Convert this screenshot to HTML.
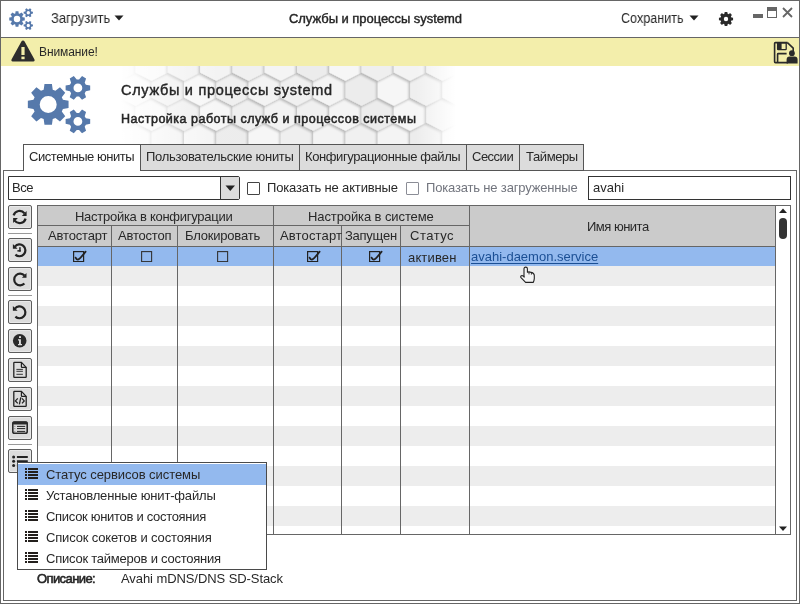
<!DOCTYPE html>
<html><head><meta charset="utf-8">
<style>
html,body{margin:0;padding:0;}
body{width:800px;height:604px;position:relative;overflow:hidden;background:#fff;font-family:"Liberation Sans",sans-serif;color:#282828;-webkit-font-smoothing:antialiased;}
.t{will-change:transform;}
.t{position:absolute;white-space:nowrap;font-size:13px;line-height:13px;}
.tb{position:absolute;left:8px;width:24px;height:24px;box-sizing:border-box;border:1px solid #5e5e5e;border-radius:2px;background:#dcdcdc;box-shadow:inset 0 0 0 1px #e9e9e9;}
.tb svg{position:absolute;left:-1px;top:-1px;}
.sep{position:absolute;left:8px;width:24px;height:1px;background:#9a9a9a;}
.hl{position:absolute;height:1px;background:#666666;}
.vl{position:absolute;width:1px;background:#666666;}
.tab{position:absolute;top:144px;height:27px;box-sizing:border-box;border:1px solid #555;background:#dcdcdc;}
</style></head><body>
<!-- window border -->
<div style="position:absolute;left:0;top:0;width:800px;height:604px;box-sizing:border-box;border:1px solid #666666;"></div>

<!-- title bar -->
<svg style="position:absolute;left:0;top:0" width="40" height="37"><path fill="#5679ab" fill-rule="evenodd" d="M15.28,13.41 L15.59,11.26 L18.41,11.26 L18.72,13.41 L19.74,13.83 L21.47,12.53 L23.47,14.53 L22.17,16.26 L22.59,17.28 L24.74,17.59 L24.74,20.41 L22.59,20.72 L22.17,21.74 L23.47,23.47 L21.47,25.47 L19.74,24.17 L18.72,24.59 L18.41,26.74 L15.59,26.74 L15.28,24.59 L14.26,24.17 L12.53,25.47 L10.53,23.47 L11.83,21.74 L11.41,20.72 L9.26,20.41 L9.26,17.59 L11.41,17.28 L11.83,16.26 L10.53,14.53 L12.53,12.53 L14.26,13.83ZM20.23,19.00 A3.23,3.23 0 1,0 13.77,19.00 A3.23,3.23 0 1,0 20.23,19.00ZM31.31,11.50 L32.95,11.84 L32.95,13.62 L31.31,13.96 L30.87,14.73 L31.39,16.33 L29.85,17.22 L28.73,15.97 L27.84,15.97 L26.72,17.22 L25.18,16.33 L25.70,14.73 L25.26,13.96 L23.62,13.62 L23.62,11.84 L25.26,11.50 L25.70,10.73 L25.18,9.13 L26.72,8.24 L27.84,9.49 L28.73,9.49 L29.85,8.24 L31.39,9.13 L30.87,10.73ZM29.96,12.73 A1.67,1.67 0 1,0 26.61,12.73 A1.67,1.67 0 1,0 29.96,12.73ZM31.31,24.23 L32.95,24.57 L32.95,26.35 L31.31,26.69 L30.87,27.46 L31.39,29.06 L29.85,29.95 L28.73,28.70 L27.84,28.70 L26.72,29.95 L25.18,29.06 L25.70,27.46 L25.26,26.69 L23.62,26.35 L23.62,24.57 L25.26,24.23 L25.70,23.46 L25.18,21.86 L26.72,20.97 L27.84,22.22 L28.73,22.22 L29.85,20.97 L31.39,21.86 L30.87,23.46ZM29.96,25.46 A1.67,1.67 0 1,0 26.61,25.46 A1.67,1.67 0 1,0 29.96,25.46Z"/></svg>
<div class="t " style="left:51px;top:11px;font-size:14px;line-height:14px;transform:scaleX(0.925);transform-origin:0 0">Загрузить</div>
<svg style="position:absolute;left:114px;top:15px" width="10" height="6"><path d="M0.5,0.5 H9.5 L5,5.5Z" fill="#222"/></svg>
<div class="t " style="left:289px;top:12px;letter-spacing:-0.05px;-webkit-text-stroke:0.4px #222;">Службы и процессы systemd</div>
<div class="t " style="left:621px;top:11px;font-size:14px;line-height:14px;transform:scaleX(0.9);transform-origin:0 0">Сохранить</div>
<svg style="position:absolute;left:689px;top:15px" width="10" height="6"><path d="M0.5,0.5 H9.5 L5,5.5Z" fill="#222"/></svg>
<svg style="position:absolute;left:718px;top:11px" width="16" height="16" viewBox="0 0 16 16"><path fill="#2a2a2a" fill-rule="evenodd" d="M6.52,2.60 L6.65,0.93 L9.35,0.93 L9.48,2.60 L10.77,3.14 L12.05,2.05 L13.95,3.95 L12.86,5.23 L13.40,6.52 L15.07,6.65 L15.07,9.35 L13.40,9.48 L12.86,10.77 L13.95,12.05 L12.05,13.95 L10.77,12.86 L9.48,13.40 L9.35,15.07 L6.65,15.07 L6.52,13.40 L5.23,12.86 L3.95,13.95 L2.05,12.05 L3.14,10.77 L2.60,9.48 L0.93,9.35 L0.93,6.65 L2.60,6.52 L3.14,5.23 L2.05,3.95 L3.95,2.05 L5.23,3.14ZM10.20,8.00 A2.20,2.20 0 1,0 5.80,8.00 A2.20,2.20 0 1,0 10.20,8.00Z"/></svg>
<div style="position:absolute;left:753px;top:14px;width:10px;height:4px;background:#666666"></div>
<div style="position:absolute;left:767px;top:7px;width:10px;height:11px;box-sizing:border-box;border:1px solid #666666;border-top:4px solid #666666"></div>
<svg style="position:absolute;left:782px;top:7px" width="11" height="11"><path d="M1,1 L10,10 M10,1 L1,10" stroke="#666666" stroke-width="1.8"/></svg>
<div class="hl" style="left:0;top:37px;width:800px"></div>

<!-- warning bar -->
<div style="position:absolute;left:1px;top:38px;width:798px;height:28px;background:#f3eeab"></div>
<svg style="position:absolute;left:10px;top:39px" width="26" height="24" viewBox="0 0 26 24"><path d="M13,1.5 Q14,1.5 14.6,2.6 L24.5,20.4 Q25.2,22.3 23.4,22.6 L2.6,22.6 Q0.8,22.3 1.5,20.4 L11.4,2.6 Q12,1.5 13,1.5Z" fill="#2d2d2d"/><rect x="11.4" y="8" width="3.2" height="8" fill="#f3eeab"/><rect x="11.4" y="17.6" width="3.2" height="2.6" fill="#f3eeab"/></svg>
<div class="t " style="left:39px;top:46px;font-size:12px;line-height:12px;letter-spacing:-0.1px">Внимание!</div>
<svg style="position:absolute;left:773px;top:41px" width="26" height="24" viewBox="0 0 26 24"><path d="M14.4,1.6 L20.2,7.2 L20.2,11" fill="none" stroke="#2a2a2a" stroke-width="1.6"/><path d="M15,21.6 L2.4,21.6 Q1.6,21.6 1.6,20.8 L1.6,2.4 Q1.6,1.6 2.4,1.6 L14.6,1.6" fill="none" stroke="#2a2a2a" stroke-width="1.6"/><rect x="4.6" y="1.8" width="8.6" height="6.8" rx="0.6" fill="none" stroke="#2a2a2a" stroke-width="1.3"/><rect x="4.4" y="1.8" width="4.2" height="6.8" fill="#2a2a2a"/><path d="M4.6,21 L4.6,13.2 Q4.6,12.6 5.2,12.6 L13.6,12.6" fill="none" stroke="#2a2a2a" stroke-width="1.6"/><circle cx="18.9" cy="12.2" r="2.9" fill="#2a2a2a"/><path d="M13.6,22.6 L13.6,18.8 Q13.6,15.6 16.6,15.6 L21.4,15.6 Q24.6,15.6 24.6,18.8 L24.6,22.6 Z" fill="#2a2a2a"/></svg>

<!-- banner -->
<div style="position:absolute;left:1px;top:66px;width:798px;height:104px;overflow:hidden">
<svg width="798" height="104" viewBox="1 66 798 104" style="position:absolute;left:0;top:0"><rect x="1" y="66" width="798" height="104" fill="#e6e6e6"/>
<defs><linearGradient id="hg1" x1="0" x2="1" y1="0" y2="1"><stop offset="0" stop-color="#f8f8f8"/><stop offset="1" stop-color="#e2e2e2"/></linearGradient>
<linearGradient id="hg2" x1="0" x2="1" y1="0" y2="1"><stop offset="0" stop-color="#f2f2f2"/><stop offset="1" stop-color="#dedede"/></linearGradient>
<linearGradient id="hg3" x1="0" x2="1" y1="0" y2="1"><stop offset="0" stop-color="#fafafa"/><stop offset="1" stop-color="#e8e8e8"/></linearGradient>
<linearGradient id="hg4" x1="1" x2="0" y1="0" y2="1"><stop offset="0" stop-color="#f4f4f4"/><stop offset="1" stop-color="#e0e0e0"/></linearGradient>
<filter id="hsh" x="-10%" y="-10%" width="120%" height="120%"><feDropShadow dx="-1.4" dy="1.8" stdDeviation="1.3" flood-color="#000" flood-opacity="0.24"/></filter>
<linearGradient id="fade" x1="0" x2="1" y1="0" y2="0">
<stop offset="0" stop-color="#fff" stop-opacity="1"/>
<stop offset="0.15" stop-color="#fff" stop-opacity="1"/>
<stop offset="0.2" stop-color="#fff" stop-opacity="0.6"/>
<stop offset="0.27" stop-color="#fff" stop-opacity="0.03"/>
<stop offset="0.52" stop-color="#fff" stop-opacity="0"/>
<stop offset="0.57" stop-color="#fff" stop-opacity="1"/>
<stop offset="1" stop-color="#fff" stop-opacity="1"/>
</linearGradient></defs>
<polygon points="103.2,172.3 119.4,180.5 119.4,197.5 103.2,205.7 87.1,197.5 87.1,180.5" fill="#ececec" filter="url(#hsh)"/>
<polygon points="135.5,172.3 151.7,180.5 151.7,197.5 135.5,205.7 119.4,197.5 119.4,180.5" fill="#f6f6f6" filter="url(#hsh)"/>
<polygon points="167.8,172.3 184.0,180.5 184.0,197.5 167.8,205.7 151.7,197.5 151.7,180.5" fill="#efefef" filter="url(#hsh)"/>
<polygon points="200.1,172.3 216.3,180.5 216.3,197.5 200.1,205.7 184.0,197.5 184.0,180.5" fill="#f3f3f3" filter="url(#hsh)"/>
<polygon points="232.4,172.3 248.6,180.5 248.6,197.5 232.4,205.7 216.3,197.5 216.3,180.5" fill="#f0f0f0" filter="url(#hsh)"/>
<polygon points="264.7,172.3 280.9,180.5 280.9,197.5 264.7,205.7 248.6,197.5 248.6,180.5" fill="#f4f4f4" filter="url(#hsh)"/>
<polygon points="297.0,172.3 313.1,180.5 313.1,197.5 297.0,205.7 280.9,197.5 280.9,180.5" fill="#ececec" filter="url(#hsh)"/>
<polygon points="329.3,172.3 345.4,180.5 345.4,197.5 329.3,205.7 313.2,197.5 313.2,180.5" fill="#f6f6f6" filter="url(#hsh)"/>
<polygon points="361.6,172.3 377.8,180.5 377.8,197.5 361.6,205.7 345.5,197.5 345.5,180.5" fill="#efefef" filter="url(#hsh)"/>
<polygon points="393.9,172.3 410.1,180.5 410.1,197.5 393.9,205.7 377.8,197.5 377.8,180.5" fill="#f3f3f3" filter="url(#hsh)"/>
<polygon points="426.2,172.3 442.4,180.5 442.4,197.5 426.2,205.7 410.1,197.5 410.1,180.5" fill="#f0f0f0" filter="url(#hsh)"/>
<polygon points="458.5,172.3 474.6,180.5 474.6,197.5 458.5,205.7 442.4,197.5 442.4,180.5" fill="#f4f4f4" filter="url(#hsh)"/>
<polygon points="490.8,172.3 506.9,180.5 506.9,197.5 490.8,205.7 474.7,197.5 474.7,180.5" fill="#ececec" filter="url(#hsh)"/>
<polygon points="119.4,147.3 135.5,155.5 135.5,172.5 119.4,180.7 103.2,172.5 103.2,155.5" fill="#efefef" filter="url(#hsh)"/>
<polygon points="151.7,147.3 167.8,155.5 167.8,172.5 151.7,180.7 135.5,172.5 135.5,155.5" fill="#f3f3f3" filter="url(#hsh)"/>
<polygon points="184.0,147.3 200.1,155.5 200.1,172.5 184.0,180.7 167.8,172.5 167.8,155.5" fill="#f0f0f0" filter="url(#hsh)"/>
<polygon points="216.3,147.3 232.4,155.5 232.4,172.5 216.3,180.7 200.1,172.5 200.1,155.5" fill="#f4f4f4" filter="url(#hsh)"/>
<polygon points="248.6,147.3 264.7,155.5 264.7,172.5 248.6,180.7 232.4,172.5 232.4,155.5" fill="#ececec" filter="url(#hsh)"/>
<polygon points="280.9,147.3 297.0,155.5 297.0,172.5 280.9,180.7 264.7,172.5 264.7,155.5" fill="#f6f6f6" filter="url(#hsh)"/>
<polygon points="313.2,147.3 329.3,155.5 329.3,172.5 313.2,180.7 297.0,172.5 297.0,155.5" fill="#efefef" filter="url(#hsh)"/>
<polygon points="345.5,147.3 361.6,155.5 361.6,172.5 345.5,180.7 329.3,172.5 329.3,155.5" fill="#f3f3f3" filter="url(#hsh)"/>
<polygon points="377.8,147.3 393.9,155.5 393.9,172.5 377.8,180.7 361.6,172.5 361.6,155.5" fill="#f0f0f0" filter="url(#hsh)"/>
<polygon points="410.1,147.3 426.2,155.5 426.2,172.5 410.1,180.7 393.9,172.5 393.9,155.5" fill="#f4f4f4" filter="url(#hsh)"/>
<polygon points="442.4,147.3 458.5,155.5 458.5,172.5 442.4,180.7 426.2,172.5 426.2,155.5" fill="#ececec" filter="url(#hsh)"/>
<polygon points="474.7,147.3 490.8,155.5 490.8,172.5 474.7,180.7 458.5,172.5 458.5,155.5" fill="#f6f6f6" filter="url(#hsh)"/>
<polygon points="103.2,122.3 119.4,130.5 119.4,147.5 103.2,155.7 87.1,147.5 87.1,130.5" fill="#efefef" filter="url(#hsh)"/>
<polygon points="135.5,122.3 151.7,130.5 151.7,147.5 135.5,155.7 119.4,147.5 119.4,130.5" fill="#f3f3f3" filter="url(#hsh)"/>
<polygon points="167.8,122.3 184.0,130.5 184.0,147.5 167.8,155.7 151.7,147.5 151.7,130.5" fill="#f0f0f0" filter="url(#hsh)"/>
<polygon points="200.1,122.3 216.3,130.5 216.3,147.5 200.1,155.7 184.0,147.5 184.0,130.5" fill="#f4f4f4" filter="url(#hsh)"/>
<polygon points="232.4,122.3 248.6,130.5 248.6,147.5 232.4,155.7 216.3,147.5 216.3,130.5" fill="#ececec" filter="url(#hsh)"/>
<polygon points="264.7,122.3 280.9,130.5 280.9,147.5 264.7,155.7 248.6,147.5 248.6,130.5" fill="#f6f6f6" filter="url(#hsh)"/>
<polygon points="297.0,122.3 313.1,130.5 313.1,147.5 297.0,155.7 280.9,147.5 280.9,130.5" fill="#efefef" filter="url(#hsh)"/>
<polygon points="329.3,122.3 345.4,130.5 345.4,147.5 329.3,155.7 313.2,147.5 313.2,130.5" fill="#f3f3f3" filter="url(#hsh)"/>
<polygon points="361.6,122.3 377.8,130.5 377.8,147.5 361.6,155.7 345.5,147.5 345.5,130.5" fill="#f0f0f0" filter="url(#hsh)"/>
<polygon points="393.9,122.3 410.1,130.5 410.1,147.5 393.9,155.7 377.8,147.5 377.8,130.5" fill="#f4f4f4" filter="url(#hsh)"/>
<polygon points="426.2,122.3 442.4,130.5 442.4,147.5 426.2,155.7 410.1,147.5 410.1,130.5" fill="#ececec" filter="url(#hsh)"/>
<polygon points="458.5,122.3 474.6,130.5 474.6,147.5 458.5,155.7 442.4,147.5 442.4,130.5" fill="#f6f6f6" filter="url(#hsh)"/>
<polygon points="490.8,122.3 506.9,130.5 506.9,147.5 490.8,155.7 474.7,147.5 474.7,130.5" fill="#efefef" filter="url(#hsh)"/>
<polygon points="119.4,97.3 135.5,105.5 135.5,122.5 119.4,130.7 103.2,122.5 103.2,105.5" fill="#f0f0f0" filter="url(#hsh)"/>
<polygon points="151.7,97.3 167.8,105.5 167.8,122.5 151.7,130.7 135.5,122.5 135.5,105.5" fill="#f4f4f4" filter="url(#hsh)"/>
<polygon points="184.0,97.3 200.1,105.5 200.1,122.5 184.0,130.7 167.8,122.5 167.8,105.5" fill="#ececec" filter="url(#hsh)"/>
<polygon points="216.3,97.3 232.4,105.5 232.4,122.5 216.3,130.7 200.1,122.5 200.1,105.5" fill="#f6f6f6" filter="url(#hsh)"/>
<polygon points="248.6,97.3 264.7,105.5 264.7,122.5 248.6,130.7 232.4,122.5 232.4,105.5" fill="#efefef" filter="url(#hsh)"/>
<polygon points="280.9,97.3 297.0,105.5 297.0,122.5 280.9,130.7 264.7,122.5 264.7,105.5" fill="#f3f3f3" filter="url(#hsh)"/>
<polygon points="313.2,97.3 329.3,105.5 329.3,122.5 313.2,130.7 297.0,122.5 297.0,105.5" fill="#f0f0f0" filter="url(#hsh)"/>
<polygon points="345.5,97.3 361.6,105.5 361.6,122.5 345.5,130.7 329.3,122.5 329.3,105.5" fill="#f4f4f4" filter="url(#hsh)"/>
<polygon points="377.8,97.3 393.9,105.5 393.9,122.5 377.8,130.7 361.6,122.5 361.6,105.5" fill="#ececec" filter="url(#hsh)"/>
<polygon points="410.1,97.3 426.2,105.5 426.2,122.5 410.1,130.7 393.9,122.5 393.9,105.5" fill="#f6f6f6" filter="url(#hsh)"/>
<polygon points="442.4,97.3 458.5,105.5 458.5,122.5 442.4,130.7 426.2,122.5 426.2,105.5" fill="#efefef" filter="url(#hsh)"/>
<polygon points="474.7,97.3 490.8,105.5 490.8,122.5 474.7,130.7 458.5,122.5 458.5,105.5" fill="#f3f3f3" filter="url(#hsh)"/>
<polygon points="103.2,72.3 119.4,80.5 119.4,97.5 103.2,105.7 87.1,97.5 87.1,80.5" fill="#f0f0f0" filter="url(#hsh)"/>
<polygon points="135.5,72.3 151.7,80.5 151.7,97.5 135.5,105.7 119.4,97.5 119.4,80.5" fill="#f4f4f4" filter="url(#hsh)"/>
<polygon points="167.8,72.3 184.0,80.5 184.0,97.5 167.8,105.7 151.7,97.5 151.7,80.5" fill="#ececec" filter="url(#hsh)"/>
<polygon points="200.1,72.3 216.3,80.5 216.3,97.5 200.1,105.7 184.0,97.5 184.0,80.5" fill="#f6f6f6" filter="url(#hsh)"/>
<polygon points="232.4,72.3 248.6,80.5 248.6,97.5 232.4,105.7 216.3,97.5 216.3,80.5" fill="#efefef" filter="url(#hsh)"/>
<polygon points="264.7,72.3 280.9,80.5 280.9,97.5 264.7,105.7 248.6,97.5 248.6,80.5" fill="#f3f3f3" filter="url(#hsh)"/>
<polygon points="297.0,72.3 313.1,80.5 313.1,97.5 297.0,105.7 280.9,97.5 280.9,80.5" fill="#f0f0f0" filter="url(#hsh)"/>
<polygon points="329.3,72.3 345.4,80.5 345.4,97.5 329.3,105.7 313.2,97.5 313.2,80.5" fill="#f4f4f4" filter="url(#hsh)"/>
<polygon points="361.6,72.3 377.8,80.5 377.8,97.5 361.6,105.7 345.5,97.5 345.5,80.5" fill="#ececec" filter="url(#hsh)"/>
<polygon points="393.9,72.3 410.1,80.5 410.1,97.5 393.9,105.7 377.8,97.5 377.8,80.5" fill="#f6f6f6" filter="url(#hsh)"/>
<polygon points="426.2,72.3 442.4,80.5 442.4,97.5 426.2,105.7 410.1,97.5 410.1,80.5" fill="#efefef" filter="url(#hsh)"/>
<polygon points="458.5,72.3 474.6,80.5 474.6,97.5 458.5,105.7 442.4,97.5 442.4,80.5" fill="#f3f3f3" filter="url(#hsh)"/>
<polygon points="490.8,72.3 506.9,80.5 506.9,97.5 490.8,105.7 474.7,97.5 474.7,80.5" fill="#f0f0f0" filter="url(#hsh)"/>
<polygon points="119.4,47.3 135.5,55.5 135.5,72.5 119.4,80.7 103.2,72.5 103.2,55.5" fill="#ececec" filter="url(#hsh)"/>
<polygon points="151.7,47.3 167.8,55.5 167.8,72.5 151.7,80.7 135.5,72.5 135.5,55.5" fill="#f6f6f6" filter="url(#hsh)"/>
<polygon points="184.0,47.3 200.1,55.5 200.1,72.5 184.0,80.7 167.8,72.5 167.8,55.5" fill="#efefef" filter="url(#hsh)"/>
<polygon points="216.3,47.3 232.4,55.5 232.4,72.5 216.3,80.7 200.1,72.5 200.1,55.5" fill="#f3f3f3" filter="url(#hsh)"/>
<polygon points="248.6,47.3 264.7,55.5 264.7,72.5 248.6,80.7 232.4,72.5 232.4,55.5" fill="#f0f0f0" filter="url(#hsh)"/>
<polygon points="280.9,47.3 297.0,55.5 297.0,72.5 280.9,80.7 264.7,72.5 264.7,55.5" fill="#f4f4f4" filter="url(#hsh)"/>
<polygon points="313.2,47.3 329.3,55.5 329.3,72.5 313.2,80.7 297.0,72.5 297.0,55.5" fill="#ececec" filter="url(#hsh)"/>
<polygon points="345.5,47.3 361.6,55.5 361.6,72.5 345.5,80.7 329.3,72.5 329.3,55.5" fill="#f6f6f6" filter="url(#hsh)"/>
<polygon points="377.8,47.3 393.9,55.5 393.9,72.5 377.8,80.7 361.6,72.5 361.6,55.5" fill="#efefef" filter="url(#hsh)"/>
<polygon points="410.1,47.3 426.2,55.5 426.2,72.5 410.1,80.7 393.9,72.5 393.9,55.5" fill="#f3f3f3" filter="url(#hsh)"/>
<polygon points="442.4,47.3 458.5,55.5 458.5,72.5 442.4,80.7 426.2,72.5 426.2,55.5" fill="#f0f0f0" filter="url(#hsh)"/>
<polygon points="474.7,47.3 490.8,55.5 490.8,72.5 474.7,80.7 458.5,72.5 458.5,55.5" fill="#f4f4f4" filter="url(#hsh)"/>
<rect x="1" y="66" width="798" height="104" fill="url(#fade)"/>
</svg>
</div>
<svg style="position:absolute;left:0;top:66px" width="110" height="78" viewBox="0 66 110 78"><path fill="#5679ab" fill-rule="evenodd" d="M43.67,89.68 L44.48,84.04 L51.92,84.04 L52.73,89.68 L55.41,90.79 L59.97,87.37 L65.23,92.63 L61.81,97.19 L62.92,99.87 L68.56,100.68 L68.56,108.12 L62.92,108.93 L61.81,111.61 L65.23,116.17 L59.97,121.43 L55.41,118.01 L52.73,119.12 L51.92,124.76 L44.48,124.76 L43.67,119.12 L40.99,118.01 L36.43,121.43 L31.17,116.17 L34.59,111.61 L33.48,108.93 L27.84,108.12 L27.84,100.68 L33.48,99.87 L34.59,97.19 L31.17,92.63 L36.43,87.37 L40.99,90.79ZM56.70,104.40 A8.50,8.50 0 1,0 39.70,104.40 A8.50,8.50 0 1,0 56.70,104.40ZM85.86,84.65 L90.18,85.56 L90.18,90.24 L85.86,91.15 L84.70,93.17 L86.07,97.36 L82.01,99.70 L79.07,96.42 L76.73,96.42 L73.79,99.70 L69.73,97.36 L71.10,93.17 L69.94,91.15 L65.62,90.24 L65.62,85.56 L69.94,84.65 L71.10,82.63 L69.73,78.44 L73.79,76.10 L76.73,79.38 L79.07,79.38 L82.01,76.10 L86.07,78.44 L84.70,82.63ZM82.30,87.90 A4.40,4.40 0 1,0 73.50,87.90 A4.40,4.40 0 1,0 82.30,87.90ZM85.86,118.15 L90.18,119.06 L90.18,123.74 L85.86,124.65 L84.70,126.67 L86.07,130.86 L82.01,133.20 L79.07,129.92 L76.73,129.92 L73.79,133.20 L69.73,130.86 L71.10,126.67 L69.94,124.65 L65.62,123.74 L65.62,119.06 L69.94,118.15 L71.10,116.13 L69.73,111.94 L73.79,109.60 L76.73,112.88 L79.07,112.88 L82.01,109.60 L86.07,111.94 L84.70,116.13ZM82.30,121.40 A4.40,4.40 0 1,0 73.50,121.40 A4.40,4.40 0 1,0 82.30,121.40Z"/></svg>
<div class="t " style="left:121px;top:83px;font-size:14.5px;line-height:14px;letter-spacing:0.7px;-webkit-text-stroke:0.4px #222;">Службы и процессы systemd</div>
<div class="t " style="left:121px;top:113px;font-size:12.5px;line-height:12px;letter-spacing:0.5px;-webkit-text-stroke:0.5px #222;">Настройка работы служб и процессов системы</div>

<!-- tab panel -->
<div style="position:absolute;left:3px;top:170px;width:794px;height:431px;box-sizing:border-box;border:1px solid #666666;background:#fff"></div>
<div class="tab" style="left:140px;width:160px"></div>
<div class="tab" style="left:299px;width:168px"></div>
<div class="tab" style="left:466px;width:54px"></div>
<div class="tab" style="left:519px;width:65px"></div>
<div class="tab" style="left:23px;width:118px;background:#fff;border-bottom:none"></div>
<div class="t " style="left:29px;top:150px;letter-spacing:-0.45px">Системные юниты</div>
<div class="t " style="left:146px;top:150px;letter-spacing:-0.3px">Пользовательские юниты</div>
<div class="t " style="left:305px;top:150px;letter-spacing:-0.4px">Конфигурационные файлы</div>
<div class="t " style="left:472px;top:150px;letter-spacing:-0.5px">Сессии</div>
<div class="t " style="left:526px;top:150px;letter-spacing:-0.4px">Таймеры</div>

<!-- filter row -->
<div style="position:absolute;left:8px;top:176px;width:232px;height:24px;box-sizing:border-box;border:1px solid #333;border-radius:0 2px 2px 0;background:#fff"></div>
<div style="position:absolute;left:220px;top:177px;width:19px;height:22px;box-sizing:border-box;border-left:1px solid #333;background:#dcdcdc"></div>
<svg style="position:absolute;left:225px;top:185px" width="11" height="7"><path d="M0.5,0.5 H10 L5.25,6Z" fill="#222"/></svg>
<div class="t " style="left:12px;top:181px;letter-spacing:-0.5px">Все</div>
<div style="position:absolute;left:247px;top:182px;width:13px;height:13px;box-sizing:border-box;border:1px solid #444;border-radius:1px;background:#fff"></div>
<div class="t " style="left:267px;top:181px;letter-spacing:-0.15px">Показать не активные</div>
<div style="position:absolute;left:406px;top:182px;width:13px;height:13px;box-sizing:border-box;border:1px solid #8b8d96;border-radius:1px;background:#fff"></div>
<div class="t " style="left:426px;top:181px;letter-spacing:-0.17px;color:#72757e">Показать не загруженные</div>
<div style="position:absolute;left:588px;top:176px;width:203px;height:24px;box-sizing:border-box;border:1px solid #333;background:#fff"></div>
<div class="t " style="left:593px;top:181px;letter-spacing:0px">avahi</div>

<!-- toolbar -->
<div class="tb" style="top:205px"><svg width="24" height="24" viewBox="0 0 24 24"><path d="M5.6,10.4 A6.2,6.2 0 0 1 16.5,8.3" fill="none" stroke="#222" stroke-width="2.2"/><path d="M18.6,6.1 L18.6,10.9 L13.8,10.9 Z" fill="#222"/><path d="M17.6,13.6 A6.2,6.2 0 0 1 6.7,15.7" fill="none" stroke="#222" stroke-width="2.2"/><path d="M5.1,13.1 L9.9,13.1 L5.1,17.9 Z" fill="#222"/></svg></div>
<div class="tb" style="top:238px"><svg width="24" height="24" viewBox="0 0 24 24"><path d="M6.9,8.6 A5.9,5.9 0 1 1 7.4,16.6" fill="none" stroke="#222" stroke-width="2.2"/><path d="M4.9,6.1 L4.9,10.8 L9.6,10.8 Z" fill="#222"/><rect x="11.2" y="9.2" width="1.5" height="4.4" fill="#222"/><rect x="9.4" y="12.1" width="3.3" height="1.5" fill="#222"/></svg></div>
<div class="tb" style="top:267px"><svg width="24" height="24" viewBox="0 0 24 24"><path d="M16.5,8.6 A5.9,5.9 0 1 0 16.4,16.6" fill="none" stroke="#222" stroke-width="2.2"/><path d="M18.5,6.1 L18.5,10.7 L13.9,10.7 Z" fill="#222"/></svg></div>
<div class="tb" style="top:300px"><svg width="24" height="24" viewBox="0 0 24 24"><path d="M6.9,8.6 A5.9,5.9 0 1 1 7.4,16.6" fill="none" stroke="#222" stroke-width="2.2"/><path d="M4.9,6.1 L4.9,10.8 L9.6,10.8 Z" fill="#222"/></svg></div>
<div class="tb" style="top:329px"><svg width="24" height="24" viewBox="0 0 24 24"><circle cx="11.7" cy="11.8" r="6.8" fill="#2a2a2a"/><rect x="11" y="7.2" width="2" height="1.8" fill="#ddd"/><path d="M10,10.3 L12.9,10.3 L12.9,15 L14,15 L14,16.2 L10,16.2 L10,15 L11,15 L11,11.5 L10,11.5Z" fill="#ddd"/></svg></div>
<div class="tb" style="top:358px"><svg width="24" height="24" viewBox="0 0 24 24"><path d="M5.8,5 Q5.8,4.4 6.4,4.4 L13.4,4.4 L18.2,9.4 L18.2,18.8 Q18.2,19.4 17.6,19.4 L6.4,19.4 Q5.8,19.4 5.8,18.8 Z" fill="none" stroke="#222" stroke-width="1.3"/><path d="M13.4,4.4 L13.4,8.8 Q13.4,9.4 14,9.4 L18.2,9.4" fill="none" stroke="#222" stroke-width="1.2"/><path d="M8.4,11.4 H14.9 M8.4,13.3 H14.9 M8.4,16.3 H14.9" stroke="#222" stroke-width="0.9"/></svg></div>
<div class="tb" style="top:387px"><svg width="24" height="24" viewBox="0 0 24 24"><path d="M5.8,5 Q5.8,4.4 6.4,4.4 L13.4,4.4 L18.2,9.4 L18.2,18.8 Q18.2,19.4 17.6,19.4 L6.4,19.4 Q5.8,19.4 5.8,18.8 Z" fill="none" stroke="#222" stroke-width="1.3"/><path d="M13.4,4.4 L13.4,8.8 Q13.4,9.4 14,9.4 L18.2,9.4" fill="none" stroke="#222" stroke-width="1.2"/><path d="M9.8,11.4 L7.4,13.9 L9.8,16.4 M14,11.4 L16.2,13.9 L14,16.4 M12.8,10.4 L11.4,17.4" fill="none" stroke="#222" stroke-width="1.3"/></svg></div>
<div class="tb" style="top:416px"><svg width="24" height="24" viewBox="0 0 24 24"><rect x="4.8" y="6" width="14.4" height="11.2" rx="1.8" fill="none" stroke="#2a2a2a" stroke-width="1.6"/><rect x="4.4" y="5.4" width="15.2" height="3" rx="1.4" fill="#2a2a2a"/><path d="M9,10.4 H17.2 M9,12.6 H17.2 M9,15.4 H17.2" stroke="#222" stroke-width="1"/><path d="M6.2,10.4 H7.4 M6.2,12.6 H7.4 M6.2,15.4 H7.4" stroke="#777" stroke-width="0.8"/></svg></div>
<div class="tb" style="top:449px"><svg width="24" height="24" viewBox="0 0 24 24"><circle cx="5.65" cy="8" r="1.5" fill="#222"/><circle cx="5.65" cy="12.2" r="1.5" fill="#222"/><circle cx="5.65" cy="16.5" r="1.5" fill="#222"/><path d="M8.9,8 H19.8 M8.9,12.2 H19.8 M8.9,16.5 H19.8" stroke="#222" stroke-width="1.9"/></svg></div>
<div class="sep" style="top:233px"></div>
<div class="sep" style="top:295px"></div>
<div class="sep" style="top:444px"></div>

<!-- table -->
<div style="position:absolute;left:37px;top:205px;width:754px;height:330px;box-sizing:border-box;border:1px solid #666666;background:#fff;overflow:hidden"></div>
<div style="position:absolute;left:38px;top:206px;width:737px;height:40px;background:#cbcbcb"></div>
<div style="position:absolute;left:38px;top:247px;width:737px;height:19px;background:#93b9ee"></div>
<div style="position:absolute;left:38px;top:266px;width:737px;height:20px;background:#ededed"></div>
<div style="position:absolute;left:38px;top:306px;width:737px;height:20px;background:#ededed"></div>
<div style="position:absolute;left:38px;top:346px;width:737px;height:20px;background:#ededed"></div>
<div style="position:absolute;left:38px;top:386px;width:737px;height:20px;background:#ededed"></div>
<div style="position:absolute;left:38px;top:426px;width:737px;height:20px;background:#ededed"></div>
<div style="position:absolute;left:38px;top:466px;width:737px;height:20px;background:#ededed"></div>
<div style="position:absolute;left:38px;top:506px;width:737px;height:20px;background:#ededed"></div>
<div class="hl" style="left:38px;top:225px;width:431px"></div>
<div class="hl" style="left:38px;top:246px;width:737px"></div>
<div class="vl" style="left:111px;top:226px;height:308px"></div>
<div class="vl" style="left:177px;top:226px;height:308px"></div>
<div class="vl" style="left:341px;top:226px;height:308px"></div>
<div class="vl" style="left:400px;top:226px;height:308px"></div>
<div class="vl" style="left:273px;top:206px;height:328px"></div>
<div class="vl" style="left:469px;top:206px;height:328px"></div>
<div class="vl" style="left:775px;top:206px;height:328px"></div>
<div class="t " style="left:75px;top:210px;letter-spacing:-0.27px">Настройка в конфигурации</div>
<div class="t " style="left:308px;top:210px;letter-spacing:-0.1px">Настройка в системе</div>
<div class="t " style="left:48px;top:229px;letter-spacing:-0.15px">Автостарт</div>
<div class="t " style="left:118px;top:229px;letter-spacing:-0.2px">Автостоп</div>
<div class="t " style="left:185px;top:229px;letter-spacing:-0.2px">Блокировать</div>
<div class="t " style="left:280px;top:229px;letter-spacing:0.15px">Автостарт</div>
<div class="t " style="left:345px;top:229px;letter-spacing:-0.25px">Запущен</div>
<div class="t " style="left:410px;top:229px;letter-spacing:0.5px">Статус</div>
<div class="t " style="left:587px;top:220px;letter-spacing:-0.5px">Имя юнита</div>
<svg width="14" height="13" viewBox="0 0 14 13" style="position:absolute;left:73px;top:249px"><rect x="0.6" y="2.6" width="10" height="10" fill="none" stroke="#222" stroke-width="1.2"/><path d="M2.6,8.6 Q3.6,10.8 5,10.6 Q6.6,10.4 12.6,2.6" fill="none" stroke="#222" stroke-width="1.8" stroke-linecap="round"/></svg>
<svg width="14" height="13" viewBox="0 0 14 13" style="position:absolute;left:141px;top:249px"><rect x="0.6" y="2.6" width="10" height="10" fill="none" stroke="#333" stroke-width="1.1"/></svg>
<svg width="14" height="13" viewBox="0 0 14 13" style="position:absolute;left:217px;top:249px"><rect x="0.6" y="2.6" width="10" height="10" fill="none" stroke="#333" stroke-width="1.1"/></svg>
<svg width="14" height="13" viewBox="0 0 14 13" style="position:absolute;left:307px;top:249px"><rect x="0.6" y="2.6" width="10" height="10" fill="none" stroke="#222" stroke-width="1.2"/><path d="M2.6,8.6 Q3.6,10.8 5,10.6 Q6.6,10.4 12.6,2.6" fill="none" stroke="#222" stroke-width="1.8" stroke-linecap="round"/></svg>
<svg width="14" height="13" viewBox="0 0 14 13" style="position:absolute;left:369px;top:249px"><rect x="0.6" y="2.6" width="10" height="10" fill="none" stroke="#222" stroke-width="1.2"/><path d="M2.6,8.6 Q3.6,10.8 5,10.6 Q6.6,10.4 12.6,2.6" fill="none" stroke="#222" stroke-width="1.8" stroke-linecap="round"/></svg>
<div class="t " style="left:408px;top:251px;letter-spacing:0.15px">активен</div>
<div class="t " style="left:471px;top:250px;color:#1b4f94;text-decoration:underline;text-underline-offset:2px">avahi-daemon.service</div>
<!-- scrollbar -->
<svg style="position:absolute;left:779px;top:208px" width="9" height="6"><path d="M0,5 H8 L4,0.5Z" fill="#222"/></svg>
<div style="position:absolute;left:779px;top:218px;width:8px;height:21px;border-radius:4px;background:#333"></div>
<svg style="position:absolute;left:779px;top:526px" width="9" height="6"><path d="M0,0.5 H8 L4,5Z" fill="#222"/></svg>
<!-- hand cursor -->
<svg style="position:absolute;left:519px;top:266px" width="17" height="18" viewBox="0 0 17 18"><path d="M5,11 L5,2.8 Q5,1.1 6.7,1.1 Q8.4,1.1 8.4,2.8 L8.4,6.2 Q10,5.4 12.3,6.4 Q15.3,7.2 15.3,9.6 L15.3,12.6 Q15.1,14.8 14.2,16.4 L6.6,16.4 L2,11.6 Q1.2,10.6 2.4,9.8 Q3.6,9.2 5.4,11Z" fill="#f4f4f4" stroke="#222" stroke-width="1.1" stroke-linejoin="round"/><path d="M10,6 L10,8.4 M12.4,6.6 L12.4,8.6" stroke="#222" stroke-width="0.9"/></svg>

<!-- popup menu -->
<div style="position:absolute;left:17px;top:462px;width:250px;height:108px;box-sizing:border-box;border:1px solid #4a4a4a;background:#fff"></div>
<div style="position:absolute;left:18px;top:464px;width:248px;height:21px;background:#93b9ee"></div>
<svg style="position:absolute;left:25px;top:468px" width="13" height="11" viewBox="0 0 13 11"><path d="M0,0 h2v2h-2z M0,3 h2v2h-2z M0,6 h2v2h-2z M0,9 h2v2h-2z M3,0 h10v2h-10z M3,3 h10v2h-10z M3,6 h10v2h-10z M3,9 h10v2h-10z" fill="#231f1c"/></svg>
<div class="t " style="left:46px;top:468px;letter-spacing:-0.07px">Статус сервисов системы</div>
<svg style="position:absolute;left:25px;top:489px" width="13" height="11" viewBox="0 0 13 11"><path d="M0,0 h2v2h-2z M0,3 h2v2h-2z M0,6 h2v2h-2z M0,9 h2v2h-2z M3,0 h10v2h-10z M3,3 h10v2h-10z M3,6 h10v2h-10z M3,9 h10v2h-10z" fill="#231f1c"/></svg>
<div class="t " style="left:46px;top:489px;letter-spacing:-0.18px">Установленные юнит-файлы</div>
<svg style="position:absolute;left:25px;top:510px" width="13" height="11" viewBox="0 0 13 11"><path d="M0,0 h2v2h-2z M0,3 h2v2h-2z M0,6 h2v2h-2z M0,9 h2v2h-2z M3,0 h10v2h-10z M3,3 h10v2h-10z M3,6 h10v2h-10z M3,9 h10v2h-10z" fill="#231f1c"/></svg>
<div class="t " style="left:46px;top:510px;letter-spacing:-0.3px">Список юнитов и состояния</div>
<svg style="position:absolute;left:25px;top:531px" width="13" height="11" viewBox="0 0 13 11"><path d="M0,0 h2v2h-2z M0,3 h2v2h-2z M0,6 h2v2h-2z M0,9 h2v2h-2z M3,0 h10v2h-10z M3,3 h10v2h-10z M3,6 h10v2h-10z M3,9 h10v2h-10z" fill="#231f1c"/></svg>
<div class="t " style="left:46px;top:531px;letter-spacing:-0.16px">Список сокетов и состояния</div>
<svg style="position:absolute;left:25px;top:552px" width="13" height="11" viewBox="0 0 13 11"><path d="M0,0 h2v2h-2z M0,3 h2v2h-2z M0,6 h2v2h-2z M0,9 h2v2h-2z M3,0 h10v2h-10z M3,3 h10v2h-10z M3,6 h10v2h-10z M3,9 h10v2h-10z" fill="#231f1c"/></svg>
<div class="t " style="left:46px;top:552px;letter-spacing:-0.23px">Список таймеров и состояния</div>

<!-- description -->
<div class="t " style="left:37px;top:572px;letter-spacing:-0.6px;-webkit-text-stroke:0.55px #222;">Описание:</div>
<div class="t " style="left:121px;top:572px;letter-spacing:-0.08px">Avahi mDNS/DNS SD-Stack</div>
</body></html>
